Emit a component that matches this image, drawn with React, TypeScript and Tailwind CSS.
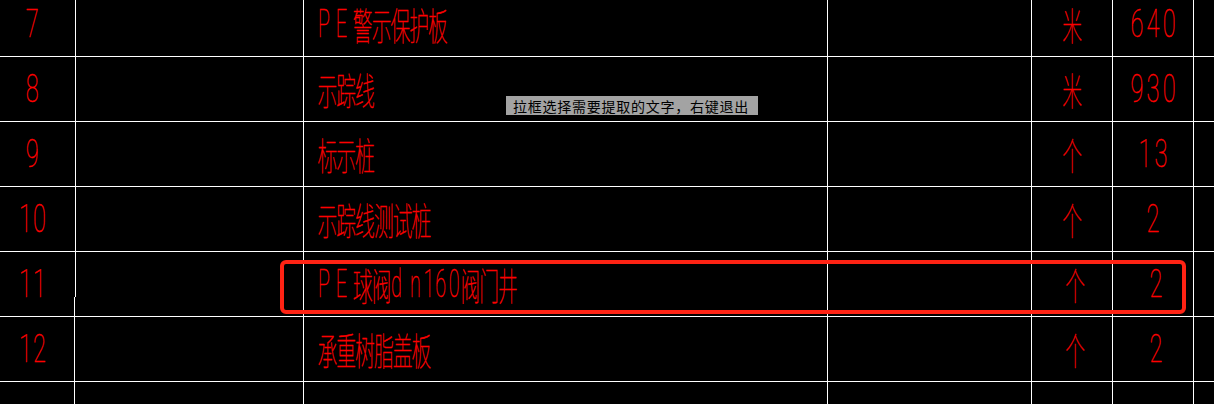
import React from 'react';

type Row = {
  no: string;
  name: string;
  unit: string;
  qty: string;
  shift?: boolean;
  first?: boolean;
  rule: 'top' | 'split' | 'bottom';
};

const rows: Row[] = [
  { no: '7', name: 'PE警示保护板', unit: '米', qty: '640', rule: 'top', first: true },
  { no: '8', name: '示踪线', unit: '米', qty: '930', rule: 'top' },
  { no: '9', name: '标示桩', unit: '个', qty: '13', rule: 'top' },
  { no: '10', name: '示踪线测试桩', unit: '个', qty: '2', rule: 'top' },
  { no: '11', name: 'PE球阀dn160阀门井', unit: '个', qty: '2', shift: true, rule: 'split' },
  { no: '12', name: '承重树脂盖板', unit: '个', qty: '2', shift: true, rule: 'bottom' },
  { no: '', name: '', unit: '', qty: '', rule: 'bottom' },
];

type Variant = 'name' | 'no' | 'qty' | 'unit';

// whole line is squeezed horizontally, cells are in unscaled px
const lineClass: Record<Variant, string> = {
  name: 'origin-left scale-x-[0.52]',
  no: 'scale-x-[0.62]',
  qty: 'scale-x-[0.62]',
  unit: 'scale-x-[0.52]',
};

const CJK = "font-['Noto_Sans_CJK_SC',sans-serif] font-thin [-webkit-text-stroke:0.45px_#ff0000]";
const LATIN = "font-['Roboto','Noto_Sans_CJK_SC',sans-serif] font-thin [-webkit-text-stroke:0.45px_#ff0000]";

function isCjk(ch: string) {
  return /[\u2e80-\u9fff\uff00-\uffef]/.test(ch);
}

function cellClass(ch: string, v: Variant) {
  if (isCjk(ch)) return `w-[36.15px] justify-center ${CJK}`;
  if (v === 'no') return `w-[22.5px] justify-center ${LATIN}`;
  if (v === 'qty') return `w-[26px] justify-center ${LATIN}`;
  if (ch === '1') return `w-[19px] justify-center ${LATIN}`;
  if (/[0-9]/.test(ch)) return `w-[26px] justify-center ${LATIN}`;
  if (ch === 'n') return `w-[27px] justify-start ${LATIN}`;
  if (ch === 'd') return `w-[36.5px] justify-start ${LATIN}`;
  return `w-[34px] justify-start ${LATIN}`;
}

function CadText({ text, v }: { text: string; v: Variant }) {
  return (
    <span className={`flex items-center text-[38px] leading-none text-[#ff0000] ${lineClass[v]}`}>
      {Array.from(text).map((ch, i) => (
        <span key={i} className={`inline-flex ${cellClass(ch, v)}`}>
          {ch}
        </span>
      ))}
    </span>
  );
}

function Rule({ kind }: { kind: Row['rule'] }) {
  if (kind === 'top') return <div className="w-[2px] border-r border-white" />;
  if (kind === 'bottom') return <div className="w-[2px] border-l border-white" />;
  return (
    <div className="flex w-[2px] flex-col">
      <div className="h-[45px] border-r border-white" />
      <div className="flex-1 border-l border-white" />
    </div>
  );
}

export default function App() {
  return (
    <div className="relative h-[404px] w-[1214px] overflow-hidden bg-black">
      {rows.map((r, i) => {
        const pad = r.first ? 'pb-[8px]' : '';
        return (
          <div
            key={i}
            className={`flex border-b border-white ${r.first ? 'h-[57px]' : 'h-[65px]'}`}
          >
            <div className={`flex w-[74px] items-center justify-center pr-[10px] ${pad}`}>
              <CadText text={r.no} v="no" />
            </div>
            <Rule kind={r.rule} />
            <div className="w-[228px] border-r border-white" />
            <div className={`flex w-[524px] items-center border-r border-white pl-[14px] ${pad}`}>
              <CadText text={r.name} v="name" />
            </div>
            <div className="w-[204px] border-r border-white" />
            <div
              className={`flex w-[81px] items-center justify-center border-r border-white ${
                r.shift ? 'pl-[6px]' : 'pl-[1px]'
              } ${pad}`}
            >
              <CadText text={r.unit} v="unit" />
            </div>
            <div
              className={`flex w-[81px] items-center justify-center border-r border-white ${
                r.shift ? 'pl-[6px]' : ''
              } ${pad}`}
            >
              <CadText text={r.qty} v="qty" />
            </div>
            <div className="flex-1" />
          </div>
        );
      })}

      {/* selection highlight around row 11 */}
      <div className="absolute left-[280px] top-[260px] h-[54px] w-[906px] rounded-[6px] border-[4px] border-[#ff2314]" />

      {/* hint tooltip */}
      <div className="absolute left-[506px] top-[96px] flex h-[19px] w-[252px] items-center bg-[#a3a3a3] px-[7px] font-['Noto_Sans_CJK_SC',sans-serif] text-[14px] leading-none tracking-[0.75px] text-black">
        拉框选择需要提取的文字，右键退出
      </div>
    </div>
  );
}
